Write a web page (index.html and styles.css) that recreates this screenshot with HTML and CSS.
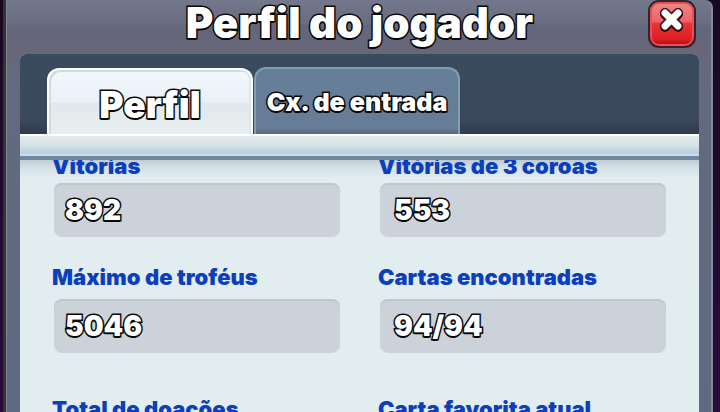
FILE: index.html
```html
<!DOCTYPE html>
<html lang="pt-BR">
<head>
    <meta charset="UTF-8">
    <meta name="viewport" content="width=device-width, initial-scale=1.0">
    <title>Perfil do jogador</title>
    <link rel="stylesheet" href="styles.css">
</head>
<body>
    <main class="dialog">
        <header class="dialog-header">
            <h1>Perfil do jogador</h1>
            <button type="button" class="close" aria-label="Fechar">
                <svg viewBox="0 0 28 28" width="28" height="28" aria-hidden="true">
                    <path class="x-shadow" d="M7 8L20 21M20 8L7 21"/>
                    <path class="x-edge" d="M7 7L20 20M20 7L7 20"/>
                    <path class="x-fill" d="M7 7L20 20M20 7L7 20"/>
                </svg>
            </button>
        </header>

        <div class="panel">
            <nav class="tabs">
                <button type="button" class="tab active">Perfil</button>
                <button type="button" class="tab">Cx. de entrada</button>
            </nav>
            <div class="ledge"></div>

            <div class="content">
                <dl class="stats stats-top">
                    <div class="stat">
                        <dt>Vitórias</dt>
                        <dd>892</dd>
                    </div>
                    <div class="stat">
                        <dt>Vitórias de 3 coroas</dt>
                        <dd>553</dd>
                    </div>
                </dl>
                <dl class="stats">
                    <div class="stat">
                        <dt>Máximo de troféus</dt>
                        <dd>5046</dd>
                    </div>
                    <div class="stat">
                        <dt>Cartas encontradas</dt>
                        <dd>94/94</dd>
                    </div>
                </dl>
                <dl class="stats stats-extra">
                    <div class="stat">
                        <dt>Total de doações</dt>
                    </div>
                    <div class="stat">
                        <dt>Carta favorita atual</dt>
                    </div>
                </dl>
            </div>
        </div>
    </main>
</body>
</html>
```

FILE: styles.css
```css
* {
    box-sizing: border-box;
}

body {
    margin: 0;
    padding: 0 7px 0 3px;
    height: 100vh;
    overflow: hidden;
    background: linear-gradient(#160a20, #2a0b3c);
    font-family: Inter, "Open Sans", sans-serif;
    font-weight: 900;
}

h1, dl, dt, dd {
    margin: 0;
}

button {
    font: inherit;
    border: none;
    cursor: pointer;
}

/* dialog frame */
.dialog {
    display: flex;
    flex-direction: column;
    height: 100%;
    padding: 0 12px 0 14px;
    border-left: 3px solid #33313a;
    border-right: 2px solid #85889a;
    background: linear-gradient(#73788c, #6a6c80 24px, #62677c 26px, #696679 54px, #646a7f 70px, #5f6a80);
    box-shadow: inset 1px 0 #85878f;
    border-top-right-radius: 8px;
}

.dialog-header {
    display: grid;
    grid-template-columns: 1fr auto 1fr;
    align-items: start;
    height: 54px;
}

h1 {
    grid-column: 2;
    font-size: 42px;
    line-height: 46px;
    font-weight: 900;
}

h1, .tab, dd {
    color: #fff;
    -webkit-text-stroke: 3px #080808;
    paint-order: stroke fill;
    text-shadow: 0 2px #080808;
}

.close {
    justify-self: end;
    display: flex;
    justify-content: center;
    width: 48px;
    height: 48px;
    margin-right: 3px;
    padding: 4px 0 0;
    border: 2px solid #3a2029;
    border-radius: 11px;
    background: linear-gradient(#ef8888, #ec6168 20px, #e5353b 21px, #e01c22 38px, #b3141b 41px);
    box-shadow: inset 0 0 0 2px #e65057;
}

.close path {
    fill: none;
    stroke-linecap: round;
}

.x-shadow, .x-edge {
    stroke: #3b090d;
    stroke-width: 10;
}

.x-fill {
    stroke: #fff;
    stroke-width: 7;
}

/* tabs */
.panel {
    display: flex;
    flex-direction: column;
    flex: 1;
    min-height: 0;
    border-radius: 6px 6px 0 0;
    overflow: hidden;
    background: #e1edef;
}

.tabs {
    display: flex;
    flex: none;
    align-items: flex-end;
    gap: 1px;
    height: 80px;
    padding-left: 27px;
    background: linear-gradient(#394b5c, #3b4a5c 64px, #303b4e);
}

.tab {
    width: 206px;
    height: 67px;
    padding: 0;
    border: 2px solid #7f9fb7;
    border-bottom: none;
    border-radius: 12px 12px 0 0;
    background: linear-gradient(#667f99, #667c97 59px, #566981);
    font-size: 25px;
    white-space: nowrap;
}

.tab.active {
    height: 66px;
    padding-top: 4px;
    border-color: #fff;
    background: linear-gradient(#f1f7fa, #eaf1f5 32px, #dfe8eb 33px, #e8eff1);
    box-shadow: inset 2px 2px #cddce1, inset -2px 0 #dbe7ea;
    font-size: 37px;
}

.ledge {
    flex: none;
    height: 26px;
    border-top: 2px solid #fff;
    border-bottom: 4px solid #71879d;
    background: linear-gradient(#e2ebec, #d3e1e6 10px, #b9ced8 17px, #c7dcec 18px);
}

/* player stats, scrolled under the ledge */
.content {
    flex: 1;
    min-height: 0;
    overflow: hidden;
    padding: 0 33px 0 34px;
    background: linear-gradient(#bfcdd3, #d5e1e5 8px, #e1edef 18px);
}

.stats {
    display: grid;
    grid-template-columns: 1fr 1fr;
    column-gap: 40px;
    margin-top: 28px;
}

.stats-top {
    margin-top: -6px;
}

.stats-extra {
    margin-top: 44px;
}

dt {
    margin: 0 0 10px -2px;
    color: #0d3fbd;
    font-size: 22px;
    line-height: 24px;
    white-space: nowrap;
}

.stats-top dt {
    margin-bottom: 5px;
}

dd {
    height: 54px;
    padding-left: 11px;
    border-radius: 8px;
    background: #cbd2d9;
    box-shadow: inset 0 2px #bec7cc;
    font-size: 28px;
    line-height: 54px;
}

.stat:nth-child(2) dd {
    padding-left: 14px;
}
```
